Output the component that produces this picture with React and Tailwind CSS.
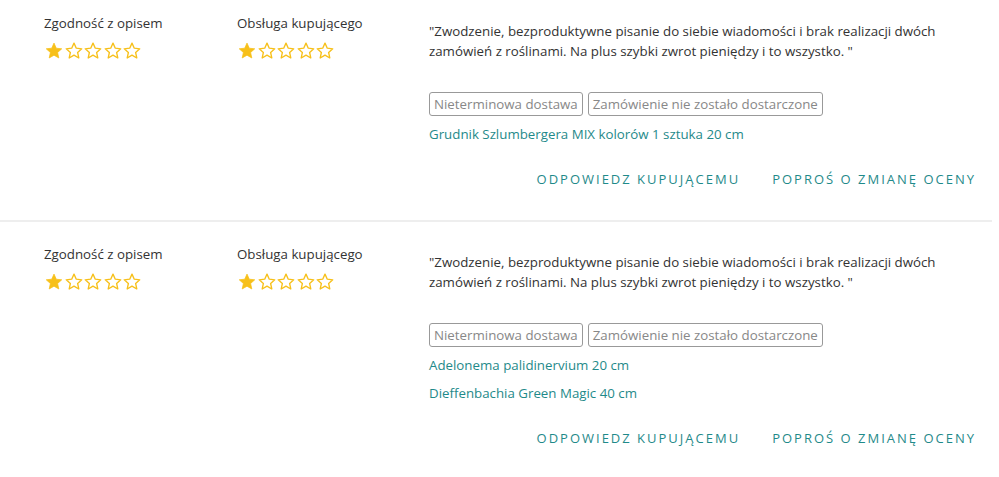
const reviews = [
  {
    comment:
      '"Zwodzenie, bezproduktywne pisanie do siebie wiadomości i brak realizacji dwóch zamówień z roślinami. Na plus szybki zwrot pieniędzy i to wszystko. "',
    tags: ['Nieterminowa dostawa', 'Zamówienie nie zostało dostarczone'],
    products: ['Grudnik Szlumbergera MIX kolorów 1 sztuka 20 cm'],
    pt: 'pt-[14px]',
  },
  {
    comment:
      '"Zwodzenie, bezproduktywne pisanie do siebie wiadomości i brak realizacji dwóch zamówień z roślinami. Na plus szybki zwrot pieniędzy i to wszystko. "',
    tags: ['Nieterminowa dostawa', 'Zamówienie nie zostało dostarczone'],
    products: ['Adelonema palidinervium 20 cm', 'Dieffenbachia Green Magic 40 cm'],
    pt: 'pt-[23px]',
  },
]

function Star({ filled }) {
  return (
    <svg width="18" height="17" viewBox="0 0 24 23">
      <path
        d="M12 1.5l3.1 6.9 7.4.8-5.6 5 1.6 7.4L12 17.8l-6.5 3.8 1.6-7.4-5.6-5 7.4-.8z"
        fill={filled ? '#f7c01a' : 'none'}
        stroke="#f7c01a"
        strokeWidth={filled ? 1 : 1.8}
        strokeLinejoin="round"
      />
    </svg>
  )
}

function Stars({ value }) {
  return (
    <div className="flex gap-[1.5px]">
      {[1, 2, 3, 4, 5].map((i) => (
        <Star key={i} filled={i <= value} />
      ))}
    </div>
  )
}

function Rating({ label, value, width }) {
  return (
    <div className={width}>
      <p className="text-[13.3px] leading-[18px] text-[#333]">{label}</p>
      <div className="mt-[10px] pl-[1px]">
        <Stars value={value} />
      </div>
    </div>
  )
}

function Review({ review }) {
  return (
    <div className={`${review.pt} pb-[31px] pl-[44px] pr-[16px] flex`}>
      <Rating label="Zgodność z opisem" value={1} width="w-[193px]" />
      <Rating label="Obsługa kupującego" value={1} width="w-[192px]" />
      <div className="flex-1 pt-[7px]">
        <p className="text-[13.3px] leading-[20px] text-[#333]">{review.comment}</p>
        <div className="mt-[31px] flex gap-[5px]">
          {review.tags.map((t) => (
            <span key={t} className="h-[24px] px-[4px] border border-[#999] rounded-[3px] text-[13.3px] leading-[22px] text-[#888]">
              {t}
            </span>
          ))}
        </div>
        <div className="mt-[8px] flex flex-col gap-[8px]">
          {review.products.map((p) => (
            <a key={p} className="text-[13.3px] leading-[20px] text-[#1f8a8a] cursor-pointer">{p}</a>
          ))}
        </div>
        <div className="mt-[25px] flex justify-end gap-[32px]">
          <button className="text-[13px] leading-[20px] tracking-[2px] uppercase text-[#1f8a8a]">Odpowiedz kupującemu</button>
          <button className="text-[13px] leading-[20px] tracking-[2px] uppercase text-[#1f8a8a]">Poproś o zmianę oceny</button>
        </div>
      </div>
    </div>
  )
}

export default function App() {
  return (
    <div className="w-[992px] bg-white" style={{ fontFamily: '"Open Sans", sans-serif' }}>
      <Review review={reviews[0]} />
      <div className="h-[2px] bg-[#eee]" />
      <Review review={reviews[1]} />
    </div>
  )
}
